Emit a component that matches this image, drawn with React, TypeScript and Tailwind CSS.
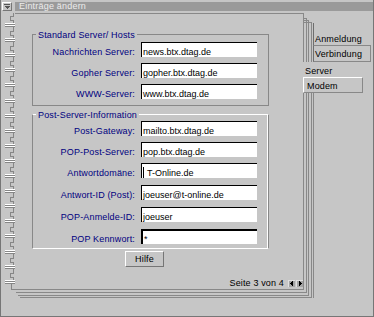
import React from 'react';

// Motif-style notebook dialog: "Einträge ändern", page 3 of 4 (Server)

const rings = Array.from({ length: 18 }, (_, k) => Math.round(25 + 15.1 * k));

function Spiral() {
  // local coords: x = abs - 1, y = abs - 13
  const ox = 1;
  const oy = 13;
  const connectors = [10, ...rings.slice(0, -1)];
  const last = rings[rings.length - 1];
  return (
    <svg width="14" height="285" viewBox="0 0 14 285" className="shrink-0" shapeRendering="crispEdges">
      {connectors.map((r) => (
        <g key={'c' + r} fill="#868686">
          <rect x={13 - ox} y={r + 2 - oy} width="1" height="4" />
          <rect x={10 - ox} y={r + 6 - oy} width="4" height="1" />
          <rect x={10 - ox} y={r + 6 - oy} width="1" height="5" />
          <rect x={10 - ox} y={r + 10 - oy} width="4" height="1" />
          <rect x={13 - ox} y={r + 10 - oy} width="1" height="3" />
        </g>
      ))}
      {rings.map((r) => (
        <g key={'r' + r}>
          <rect x={5 - ox} y={r - 2 - oy} width="10" height="1" fill="#ffffff" />
          <rect x={5 - ox} y={r - 1 - oy} width="10" height="1" fill="#868686" />
          <rect x={5 - ox} y={r - oy} width="10" height="1" fill="#ffffff" />
          <rect x={5 - ox} y={r + 1 - oy} width="10" height="1" fill="#868686" />
        </g>
      ))}
      <rect x={11 - ox} y={last + 2 - oy} width="1" height={289 - last - 2} fill="#868686" />
      <rect x={11 - ox} y={289 - oy} width="4" height="1" fill="#868686" />
    </svg>
  );
}

type RowProps = { label: string; value: string; mt: string; focused?: boolean; cursor?: boolean };

function Row({ label, value, mt, focused, cursor }: RowProps) {
  return (
    <div className={`flex h-[15px] ${mt}`}>
      <div className="w-[102px] text-right text-[#000080] pt-[3px] leading-[14px] tracking-[0.15px] whitespace-nowrap">
        {label}
      </div>
      <div
        className={`ml-[6px] w-[116px] h-[15px] bg-white text-black pl-[1px] leading-[14px] whitespace-nowrap flex ${
          focused ? 'border-t-2 border-l-2 border-black pt-[1px]' : 'border-t border-l border-black pt-[2px]'
        }`}
      >
        {cursor && <span className="inline-block w-[1px] h-[11px] bg-black mr-[3px] mt-[1px]" />}
        {value}
      </div>
    </div>
  );
}

export default function App() {
  return (
    <div
      className="relative w-[374px] h-[317px] bg-[#c6c6c6] border-l border-r border-b border-[#767676] overflow-hidden text-[9px] text-black"
      style={{ fontFamily: '"Liberation Sans", Arial, sans-serif' }}
    >
      {/* title bar */}
      <div className="flex mt-[2px] h-[9px]">
        <div className="ml-[1px] w-[10px] h-[9px] border-t border-l border-white border-r border-b border-r-[#767676] border-b-[#767676] flex items-center justify-center">
          <svg width="6" height="5" viewBox="0 0 6 5" shapeRendering="crispEdges">
            <rect x="0" y="0" width="6" height="1" fill="#555" />
            <polygon points="0,2 6,2 3,5" fill="#555" />
          </svg>
        </div>
        <div className="ml-[3px] flex-1 bg-[#9a9a9a] text-[#ececec] pl-[4px] leading-[9px] tracking-[0.2px]">
          Einträge ändern
        </div>
      </div>

      {/* stacked pages behind the current one */}
      <div className="absolute left-[15px] top-[18px] w-[291px] h-[275px] border-t border-r border-b border-[#888]" />
      <div className="absolute left-[17px] top-[20px] w-[291px] h-[276px] border-t border-r border-b border-[#888]" />
      <div className="absolute left-[19px] top-[22px] w-[292px] h-[276px] border-t border-r border-b border-[#888]" />
      <div className="absolute left-[312px] top-[23px] w-[1px] h-[275px] bg-[#888]" />

      {/* body */}
      <div className="flex mt-[2px]">
        <Spiral />
        <div className="relative z-10 w-[289px] h-[277px] bg-[#c6c6c6] border-t border-r border-b border-[#888] flex flex-col">
          {/* group 1 */}
          <div className="relative ml-[17px] mt-[20px] w-[237px] border border-[#888] pt-[7px] pb-[6px] flex flex-col">
            <div className="absolute left-[3px] -top-[5px] px-[2px] bg-[#c6c6c6] text-[#000080] leading-[10px] tracking-[0.15px] whitespace-nowrap">
              Standard Server/ Hosts
            </div>
            <Row label="Nachrichten Server:" value="news.btx.dtag.de" mt="mt-0" />
            <Row label="Gopher Server:" value="gopher.btx.dtag.de" mt="mt-[6px]" />
            <Row label="WWW-Server:" value="www.btx.dtag.de" mt="mt-[6px]" />
          </div>

          {/* group 2 */}
          <div className="relative ml-[17px] mt-[8px] w-[237px] border-t border-b border-white border-l border-r border-l-[#888] border-r-[#888] shadow-[inset_-1px_0_0_#ffffff] pt-[6px] pb-[4px] flex flex-col">
            <div className="absolute left-[3px] -top-[5px] px-[2px] bg-[#c6c6c6] text-[#000080] leading-[10px] tracking-[0.15px] whitespace-nowrap">
              Post-Server-Information
            </div>
            <Row label="Post-Gateway:" value="mailto.btx.dtag.de" mt="mt-0" />
            <Row label="POP-Post-Server:" value="pop.btx.dtag.de" mt="mt-[6px]" />
            <Row label="Antwortdomäne:" value="T-Online.de" mt="mt-[6px]" cursor />
            <Row label="Antwort-ID (Post):" value="joeuser@t-online.de" mt="mt-[7px]" />
            <Row label="POP-Anmelde-ID:" value="joeuser" mt="mt-[7px]" />
            <Row label="POP Kennwort:" value="*" mt="mt-[7px]" focused />
          </div>

          {/* help button */}
          <div className="ml-[110px] mt-[2px] w-[39px] h-[16px] border-t border-l border-white border-r border-b border-r-[#767676] border-b-[#767676] flex items-center justify-center leading-[10px] tracking-[0.2px]">
            Hilfe
          </div>

          {/* page indicator */}
          <div className="mt-[11px] h-[10px] flex items-center justify-end leading-[10px] tracking-[0.15px]">
            <span>Seite 3 von 4</span>
            <div className="ml-[4px] w-[7px] h-[7px] bg-[#a4a4a4] border-t border-l border-[#e0e0e0] flex items-center justify-center">
              <svg width="4" height="5" viewBox="0 0 4 5" shapeRendering="crispEdges">
                <polygon points="3,0 3,5 0,2.5" fill="#000" />
              </svg>
            </div>
            <div className="ml-[1px] w-[7px] h-[7px] bg-[#a4a4a4] border-t border-l border-[#e0e0e0] flex items-center justify-center">
              <svg width="4" height="5" viewBox="0 0 4 5" shapeRendering="crispEdges">
                <polygon points="1,0 1,5 4,2.5" fill="#000" />
              </svg>
            </div>
          </div>
        </div>
      </div>

      {/* tabs */}
      <div className="absolute left-[302px] top-[23px] z-20 flex flex-col">
        <div className="ml-[10px] w-[58px] h-[23px] border-l border-l-[#6e6e6e] border-b border-b-[#888] flex items-end pl-[1px] pb-[1px] leading-[10px] tracking-[0.15px]">
          Anmeldung
        </div>
        <div className="ml-[10px] w-[58px] h-[16px] border-l border-l-[#6e6e6e] border-r border-r-[#888] border-b border-b-[#888] flex items-end pl-[1px] pb-[2px] leading-[10px] tracking-[0.15px]">
          Verbindung
        </div>
        <div className="w-[40px] h-[15px] bg-[#c6c6c6] pl-[2px] pt-[4px] leading-[10px] tracking-[0.15px]">
          Server
        </div>
        <div className="w-[60px] h-[16px] bg-[#c6c6c6] border-t border-l border-white border-r border-b border-r-[#888] border-b-[#888] pl-[3px] pt-[3px] leading-[10px] tracking-[0.15px]">
          Modem
        </div>
      </div>
    </div>
  );
}
